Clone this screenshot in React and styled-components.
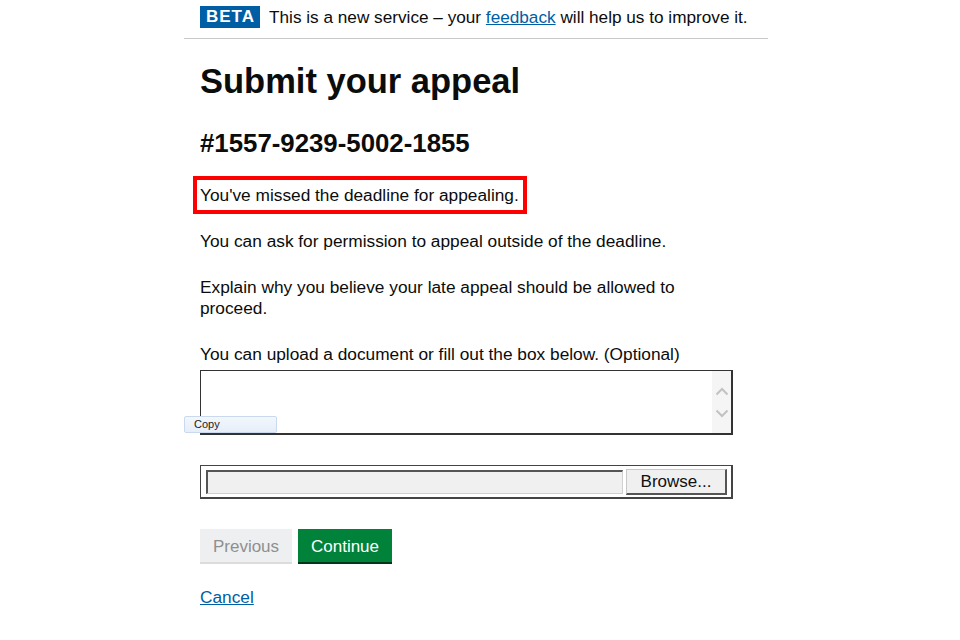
import React from "react";
import styled, { createGlobalStyle } from "styled-components";

const Global = createGlobalStyle`
  html, body { margin: 0; padding: 0; background: #fff; }
  body { font-family: "Liberation Sans", Arial, sans-serif; color: #0b0c0c; }
`;

const Page = styled.div`
  width: 584px;
  margin-left: 184px;
  position: relative;
`;

const Banner = styled.div`
  display: flex;
  align-items: center;
  padding: 6px 16px 10px;
  border-bottom: 1px solid #c8c8c8;
  font-size: 17.2px;
  line-height: 22px;
`;

const Tag = styled.span`
  display: inline-block;
  background: #005ea5;
  color: #fff;
  font-weight: 700;
  font-size: 17px;
  letter-spacing: 1px;
  line-height: 22px;
  padding: 0 5px 0 6px;
  margin-right: 9px;
`;

const Link = styled.a`
  color: #005ea5;
  text-decoration: underline;
`;

const Main = styled.main`
  padding: 0 16px;
  display: flex;
  flex-direction: column;
  align-items: flex-start;
`;

const H1 = styled.h1`
  font-size: 34.5px;
  line-height: 40px;
  font-weight: 700;
  margin: 22px 0 0;
`;

const H2 = styled.h2`
  font-size: 25.8px;
  line-height: 30px;
  font-weight: 700;
  margin: 27px 0 0;
`;

const Highlight = styled.div`
  border: 4px solid #ff0000;
  padding: 4.5px 4px 4.5px 3px;
  margin: 18px 0 0 -7px;
  font-size: 17.3px;
  line-height: 21px;
`;

const P = styled.p`
  font-size: 17.3px;
  line-height: 21px;
  margin: ${(p) => p.$mt || 25}px 0 0;
  max-width: ${(p) => p.$max || 560}px;
`;

const FieldWrap = styled.div`
  position: relative;
  margin-top: 5.5px;
  width: 533px;
`;

const TextArea = styled.div`
  box-sizing: border-box;
  width: 533px;
  height: 65px;
  border: 1px solid #333;
  border-right-width: 2px;
  border-bottom-width: 2px;
  background: #fff;
  display: flex;
  justify-content: flex-end;
`;

const Scroll = styled.div`
  width: 19px;
  background: #f5f5f5;
  display: flex;
  flex-direction: column;
  align-items: center;
  justify-content: center;
  gap: 13px;
`;

const Tooltip = styled.div`
  position: absolute;
  left: -16px;
  top: 46px;
  width: 93px;
  height: 17px;
  box-sizing: border-box;
  border: 1px solid #c9daf0;
  border-radius: 2px;
  background: linear-gradient(#f3f7fc, #e6eef9);
  font-size: 11px;
  line-height: 15px;
  padding-left: 9px;
  color: #222;
`;

const FileBox = styled.div`
  box-sizing: border-box;
  width: 533px;
  height: 34px;
  margin-top: 30px;
  border: 2px solid #444;
  border-top-width: 1px;
  border-left-width: 1px;
  display: flex;
  align-items: center;
  padding: 0 4px 0 5px;
  gap: 3px;
  background: #fff;
`;

const FileField = styled.div`
  flex: 1;
  height: 24px;
  box-sizing: border-box;
  background: #f0f0f0;
  border: 1px solid #d0d0d0;
  border-top: 2px solid #555;
  border-left: 2px solid #555;
`;

const BrowseBtn = styled.div`
  width: 101px;
  height: 26px;
  box-sizing: border-box;
  background: #f0f0f0;
  border: 1px solid #c8c8c8;
  border-right: 2px solid #555;
  border-bottom: 2px solid #555;
  font-size: 17px;
  line-height: 23px;
  text-align: center;
  color: #111;
`;

const Buttons = styled.div`
  display: flex;
  gap: 6px;
  margin-top: 30px;
`;

const Button = styled.button`
  font-family: "Liberation Sans", Arial, sans-serif;
  font-size: 17px;
  height: 33px;
  box-sizing: border-box;
  border: 0;
  padding: 2px 0 0;
  background: ${(p) => (p.$primary ? "#00823b" : "#eeeff0")};
  color: ${(p) => (p.$primary ? "#fff" : "#8f8f8f")};
  box-shadow: 0 2px 0 ${(p) => (p.$primary ? "#003618" : "#dcdcdc")};
  width: ${(p) => p.$w}px;
`;

const Cancel = styled(Link)`
  font-size: 17.3px;
  line-height: 21px;
  margin-top: 24.5px;
`;

const Chevron = ({ up }) => (
  <svg width="14" height="9" viewBox="0 0 14 9">
    <path
      d={up ? "M1.5 7.5 L7 2 L12.5 7.5" : "M1.5 1.5 L7 7 L12.5 1.5"}
      fill="none"
      stroke="#c2c2c2"
      strokeWidth="2"
    />
  </svg>
);

export default function App() {
  return (
    <Page>
      <Global />
      <Banner>
        <Tag>BETA</Tag>
        <span>
          This is a new service – your <Link href="#">feedback</Link> will help us to improve it.
        </span>
      </Banner>
      <Main>
        <H1>Submit your appeal</H1>
        <H2>#1557-9239-5002-1855</H2>
        <Highlight>You've missed the deadline for appealing.</Highlight>
        <P $mt={16.5}>You can ask for permission to appeal outside of the deadline.</P>
        <P $max={500}>Explain why you believe your late appeal should be allowed to proceed.</P>
        <P>You can upload a document or fill out the box below. (Optional)</P>
        <FieldWrap>
          <TextArea>
            <Scroll>
              <Chevron up />
              <Chevron />
            </Scroll>
          </TextArea>
          <Tooltip>Copy</Tooltip>
        </FieldWrap>
        <FileBox>
          <FileField />
          <BrowseBtn>Browse...</BrowseBtn>
        </FileBox>
        <Buttons>
          <Button $w={92}>Previous</Button>
          <Button $primary $w={94}>Continue</Button>
        </Buttons>
        <Cancel href="#">Cancel</Cancel>
      </Main>
    </Page>
  );
}
